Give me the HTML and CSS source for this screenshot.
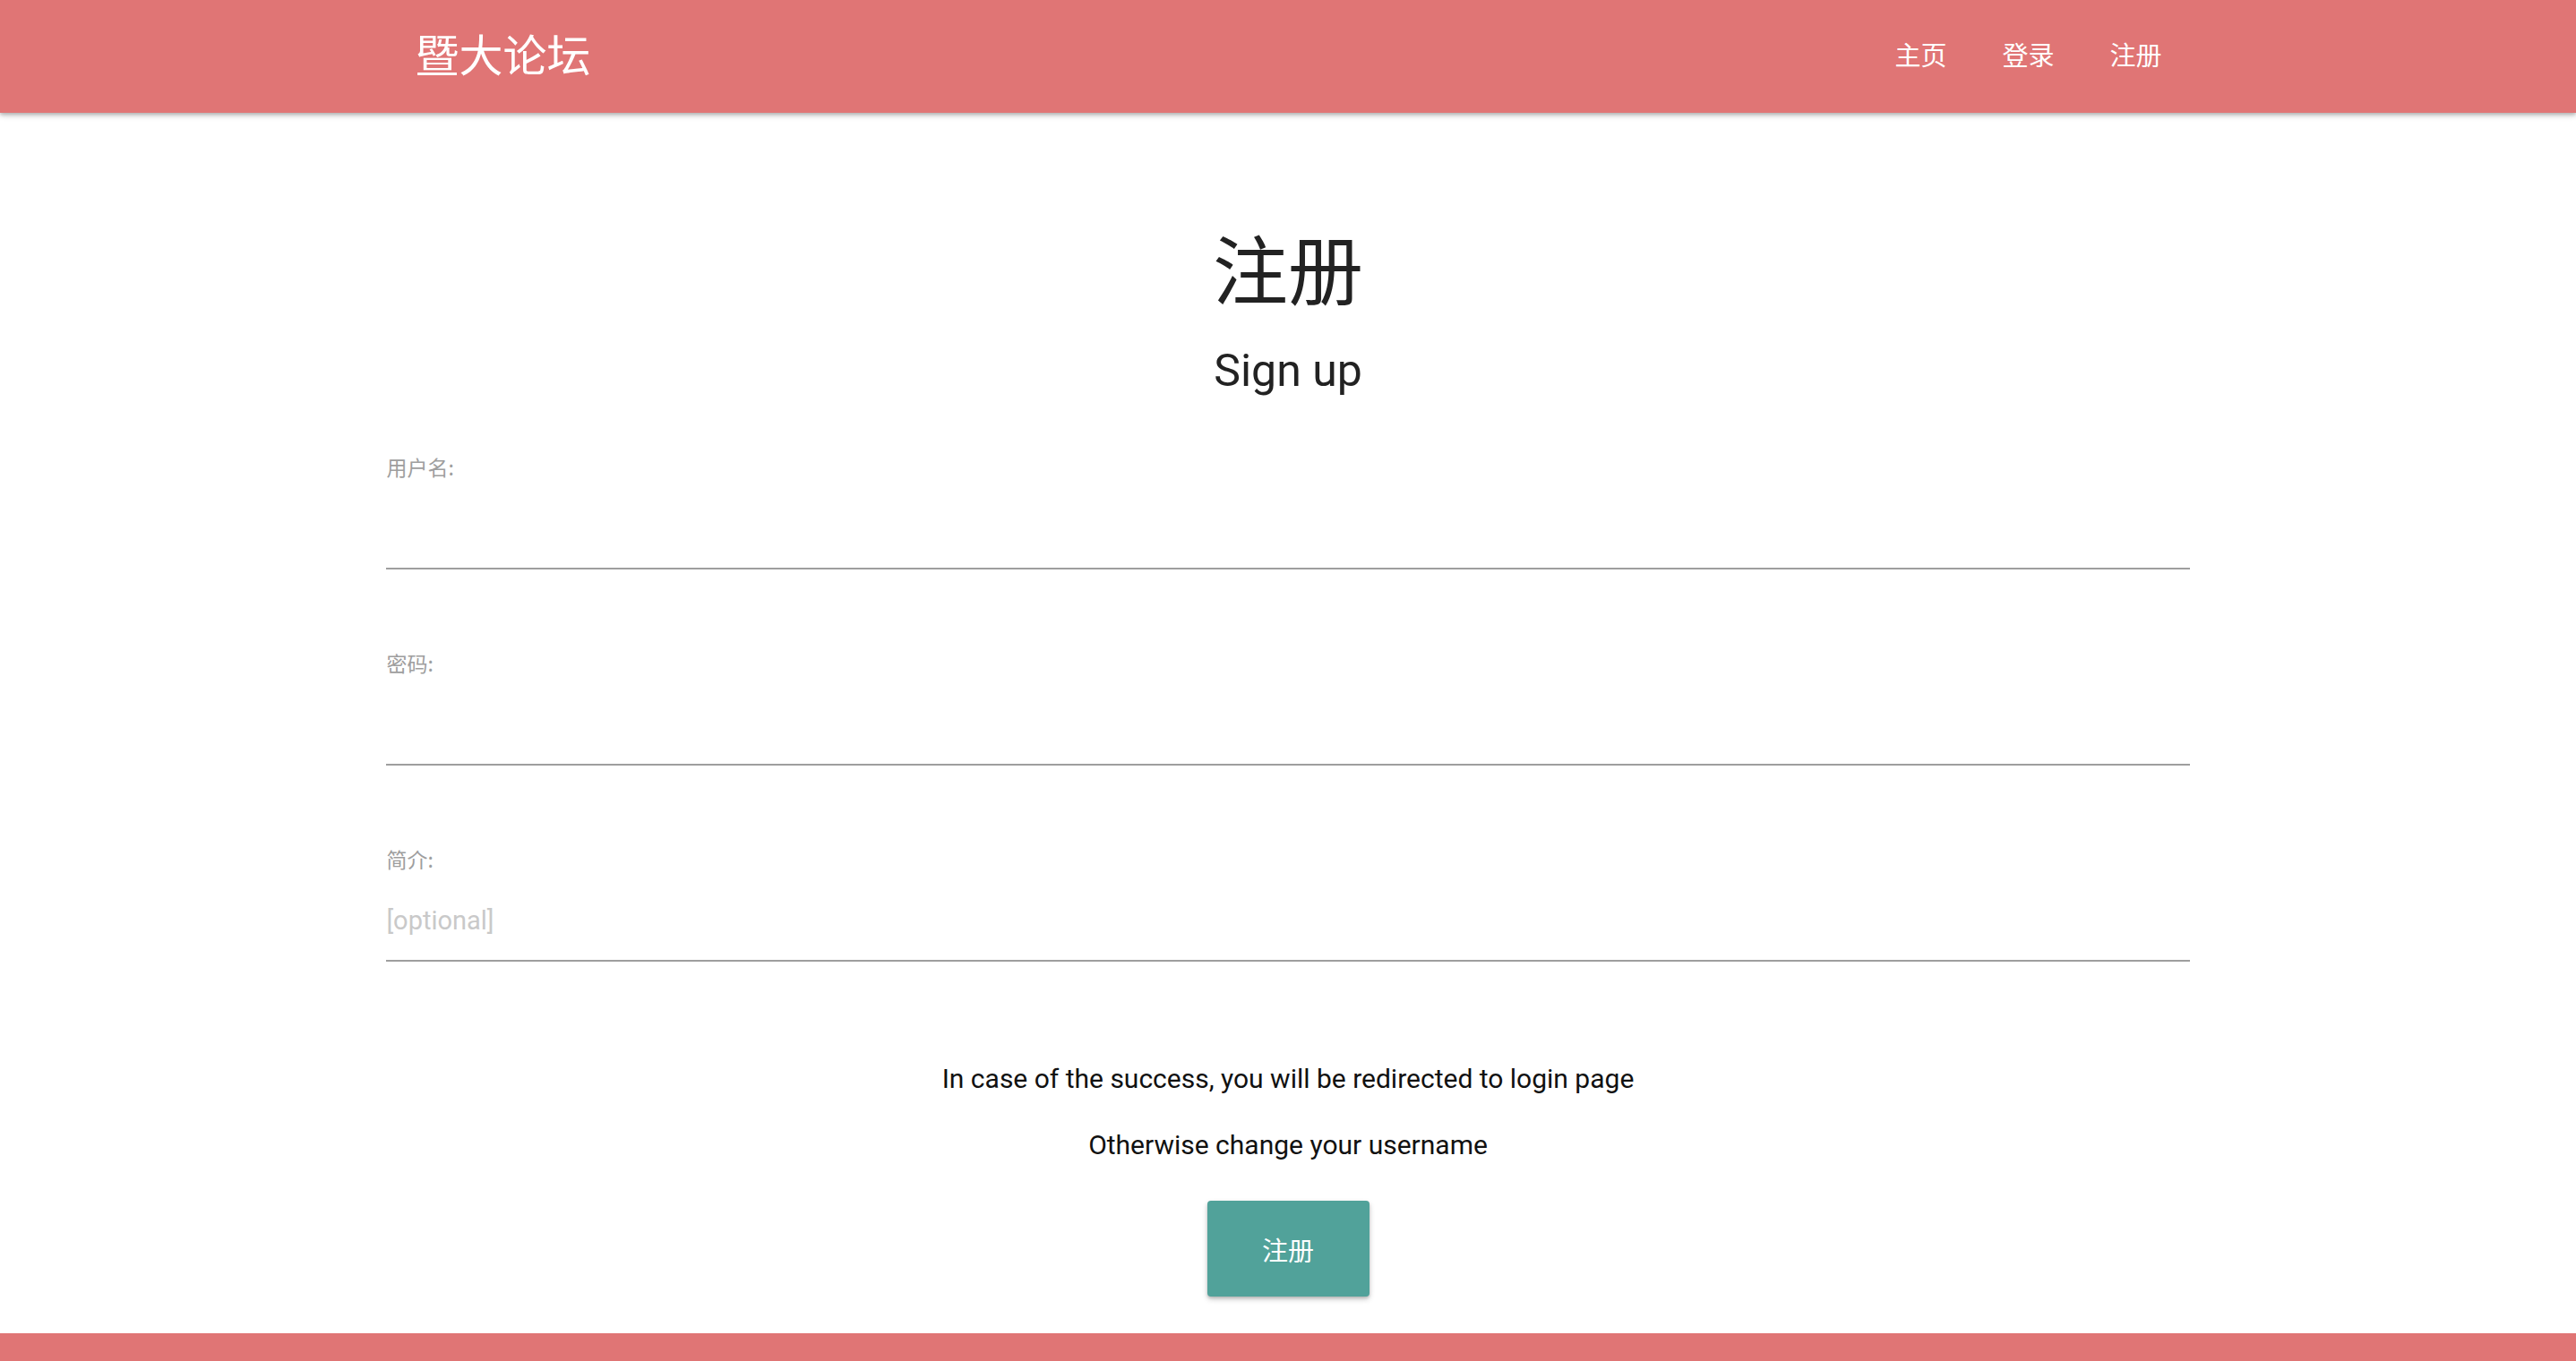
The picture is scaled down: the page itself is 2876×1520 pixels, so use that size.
FILE: index.html
```html
<!DOCTYPE html>
<html lang="zh-CN">
<head>
<meta charset="utf-8">
<title>注册 - 暨大论坛</title>
<link rel="stylesheet" href="styles.css">
</head>
<body>
<nav class="navbar">
  <div class="nav-wrapper">
    <a class="brand" href="#">暨大论坛</a>
    <ul class="nav-links">
      <li><a href="#">主页</a></li>
      <li><a href="#">登录</a></li>
      <li><a href="#">注册</a></li>
    </ul>
  </div>
</nav>
<main class="container">
  <h1 class="title">注册</h1>
  <h2 class="subtitle">Sign up</h2>
  <form class="signup-form">
    <div class="fields">
      <div class="field">
        <label class="field-label" for="username">用户名:</label>
        <input class="field-input" id="username" type="text">
      </div>
      <div class="field">
        <label class="field-label" for="password">密码:</label>
        <input class="field-input" id="password" type="password">
      </div>
      <div class="field">
        <label class="field-label" for="bio">简介:</label>
        <input class="field-input" id="bio" type="text" placeholder="[optional]">
      </div>
    </div>
    <div class="notes">
      <p class="note">In case of the success, you will be redirected to login page</p>
      <p class="note">Otherwise change your username</p>
    </div>
    <div class="actions">
      <button class="btn" type="button">注册</button>
    </div>
  </form>
</main>
<footer class="footer"></footer>
</body>
</html>
```

FILE: styles.css
```css
html, body {
  margin: 0;
  padding: 0;
  background: #ffffff;
}
body {
  font-family: Roboto, "Noto Sans CJK SC", sans-serif;
  color: rgba(0, 0, 0, 0.87);
}
.navbar {
  height: 126px;
  background: #e07575;
  box-shadow: 0 3px 6px rgba(0, 0, 0, 0.22), 0 2px 3px rgba(0, 0, 0, 0.12);
  position: relative;
  z-index: 2;
}
.nav-wrapper {
  width: 70%;
  margin: 0 auto;
  height: 100%;
  display: flex;
  align-items: center;
  justify-content: space-between;
}
.brand {
  color: #ffffff;
  text-decoration: none;
  font-size: 49px;
  line-height: 1;
  padding-left: 32px;
  margin-top: -10px;
  font-family: "Noto Sans CJK SC", sans-serif;
}
.nav-links {
  list-style: none;
  margin: -6px 0 0;
  padding: 0;
  display: flex;
  align-items: center;
}
.nav-links a {
  display: block;
  color: #ffffff;
  text-decoration: none;
  font-size: 29px;
  padding: 0 31px;
  font-family: "Noto Sans CJK SC", sans-serif;
}
.container {
  width: 70%;
  margin: 0 auto;
  padding-top: 122px;
}
.title {
  margin: 0;
  text-align: center;
  font-weight: 400;
  font-size: 84px;
  line-height: 100px;
  color: #222222;
  font-family: "Noto Sans CJK SC", sans-serif;
}
.subtitle {
  margin: 36px 0 0;
  text-align: center;
  font-weight: 400;
  font-size: 50px;
  line-height: 60px;
  color: #222222;
}
.signup-form {
  margin-top: 62px;
  display: flex;
  flex-direction: column;
}
.fields {
  display: flex;
  flex-direction: column;
  gap: 89px;
}
.field {
  display: flex;
  flex-direction: column;
}
.field-label {
  font-size: 23px;
  line-height: 30px;
  color: #9e9e9e;
  font-family: "Noto Sans CJK SC", sans-serif;
}
.field-input {
  margin-top: 10px;
  height: 88px;
  padding: 0;
  border: none;
  border-bottom: 2px solid #9e9e9e;
  outline: none;
  background: transparent;
  font-family: Roboto, sans-serif;
  font-size: 29px;
  color: rgba(0, 0, 0, 0.87);
}
.field-input::placeholder {
  color: #c9c9c9;
}
.notes {
  margin-top: 111px;
  display: flex;
  flex-direction: column;
  gap: 34px;
}
.note {
  margin: 0;
  text-align: center;
  font-size: 30px;
  line-height: 40px;
  color: #111111;
}
.actions {
  display: flex;
  justify-content: center;
  margin-top: 42px;
}
.btn {
  width: 181px;
  height: 107px;
  border: none;
  border-radius: 4px;
  background: #51a29a;
  color: #ffffff;
  font-size: 29px;
  font-family: "Noto Sans CJK SC", sans-serif;
  box-shadow: 0 3px 6px rgba(0, 0, 0, 0.2), 0 2px 3px rgba(0, 0, 0, 0.14);
  cursor: pointer;
}
.footer {
  margin-top: 41px;
  height: 120px;
  background: #e07575;
}
```
